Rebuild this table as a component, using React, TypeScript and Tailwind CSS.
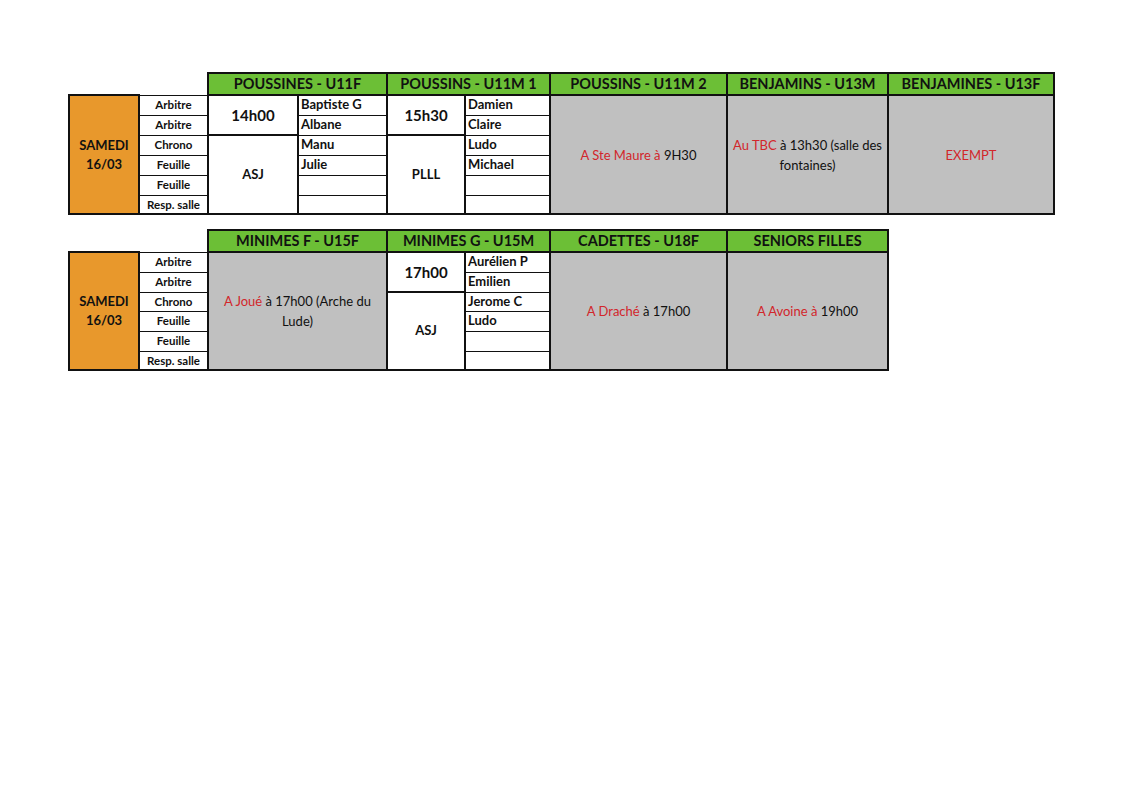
import React from 'react'

const font = { fontFamily: 'Lato, "Liberation Sans", sans-serif' }

const labels = ['Arbitre', 'Arbitre', 'Chrono', 'Feuille', 'Feuille', 'Resp. salle']

type Team = { time: string; club: string; names: string[] }

function Away({ red, rest }: { red: string; rest?: string }) {
  return (
    <>
      <span className="text-[#d2262b]">{red}</span>
      {rest}
    </>
  )
}

const th = 'border-2 border-[#111] bg-[#6cbf36] text-[14.5px] font-bold text-[#111] text-center leading-none'
const gray = 'border-2 border-[#111] bg-[#c0c0c0] text-center align-middle px-1 text-[13px] leading-[20px] text-[#111]'

function Sheet({
  headers,
  spans,
  widths,
  heights,
  render,
}: {
  headers: string[]
  spans: number[]
  widths: number[]
  heights: number[]
  render: (row: number) => React.ReactNode
}) {
  return (
    <table className="table-fixed border-collapse" style={{ width: widths.reduce((a, b) => a + b, 0) }}>
      <colgroup>
        {widths.map((w, i) => (
          <col key={i} style={{ width: w }} />
        ))}
      </colgroup>
      <tbody>
        <tr className="h-[22px]">
          <td colSpan={2} />
          {headers.map((h, i) => (
            <td key={i} colSpan={spans[i]} className={th}>
              {h}
            </td>
          ))}
        </tr>
        {labels.map((l, r) => (
          <tr key={r} style={{ height: heights[r] }}>
            {r === 0 && (
              <td rowSpan={6} className="border-2 border-[#111] bg-[#e8982c] text-center align-middle text-[13px] font-bold leading-[19px] text-[#111]">
                SAMEDI
                <br />
                16/03
              </td>
            )}
            <td className={`border border-[#111] border-x-2 text-center text-[11.5px] font-bold leading-none text-[#111] ${r === 5 ? 'border-b-2' : ''}`}>
              {l}
            </td>
            {render(r)}
          </tr>
        ))}
      </tbody>
    </table>
  )
}

function teamCells(t: Team, r: number) {
  return (
    <>
      {r === 0 && (
        <td rowSpan={2} className="border-2 border-[#111] text-center align-middle text-[15px] font-bold text-[#111]">
          {t.time}
        </td>
      )}
      {r === 2 && (
        <td rowSpan={4} className="border-2 border-[#111] text-center align-middle text-[13px] font-bold text-[#111]">
          {t.club}
        </td>
      )}
      <td
        className={`border border-[#111] border-r-2 px-[2px] text-left align-top text-[13px] font-bold leading-[17px] text-[#111] ${r === 0 ? 'border-t-2' : ''} ${r === 5 ? 'border-b-2' : ''}`}
      >
        {t.names[r] ?? ''}
      </td>
    </>
  )
}

export default function App() {
  const u11f: Team = { time: '14h00', club: 'ASJ', names: ['Baptiste G', 'Albane', 'Manu', 'Julie'] }
  const u11m: Team = { time: '15h30', club: 'PLLL', names: ['Damien', 'Claire', 'Ludo', 'Michael'] }
  const u15m: Team = { time: '17h00', club: 'ASJ', names: ['Aurélien P', 'Emilien', 'Jerome C', 'Ludo'] }

  return (
    <div className="h-[800px] w-[1132px] bg-white" style={font}>
      <div className="flex flex-col pl-[68px] pt-[72px]">
        <Sheet
          headers={['POUSSINES - U11F', 'POUSSINS - U11M 1', 'POUSSINS - U11M 2', 'BENJAMINS - U13M', 'BENJAMINES - U13F']}
          spans={[2, 2, 1, 1, 1]}
          widths={[70, 69, 90, 89, 78, 85, 177, 161, 166]}
          heights={[20, 20, 20, 20, 20, 19]}
          render={(r) => (
            <>
              {teamCells(u11f, r)}
              {teamCells(u11m, r)}
              {r === 0 && (
                <>
                  <td rowSpan={6} className={gray}>
                    <Away red="A Ste Maure à " rest="9H30" />
                  </td>
                  <td rowSpan={6} className={gray}>
                    <Away red="Au TBC" rest=" à 13h30 (salle des fontaines)" />
                  </td>
                  <td rowSpan={6} className={gray}>
                    <Away red="EXEMPT" />
                  </td>
                </>
              )}
            </>
          )}
        />
        <div className="h-[14px]" />
        <Sheet
          headers={['MINIMES F - U15F', 'MINIMES G - U15M', 'CADETTES - U18F', 'SENIORS FILLES']}
          spans={[2, 2, 1, 1]}
          widths={[70, 69, 90, 89, 78, 85, 177, 161]}
          heights={[20, 20, 19, 20, 20, 19]}
          render={(r) => (
            <>
              {r === 0 && (
                <td rowSpan={6} colSpan={2} className={`${gray} px-3`}>
                  <Away red="A Joué" rest=" à 17h00 (Arche du Lude)" />
                </td>
              )}
              {teamCells(u15m, r)}
              {r === 0 && (
                <>
                  <td rowSpan={6} className={gray}>
                    <Away red="A Draché" rest=" à 17h00" />
                  </td>
                  <td rowSpan={6} className={gray}>
                    <Away red="A Avoine à " rest="19h00" />
                  </td>
                </>
              )}
            </>
          )}
        />
      </div>
    </div>
  )
}
